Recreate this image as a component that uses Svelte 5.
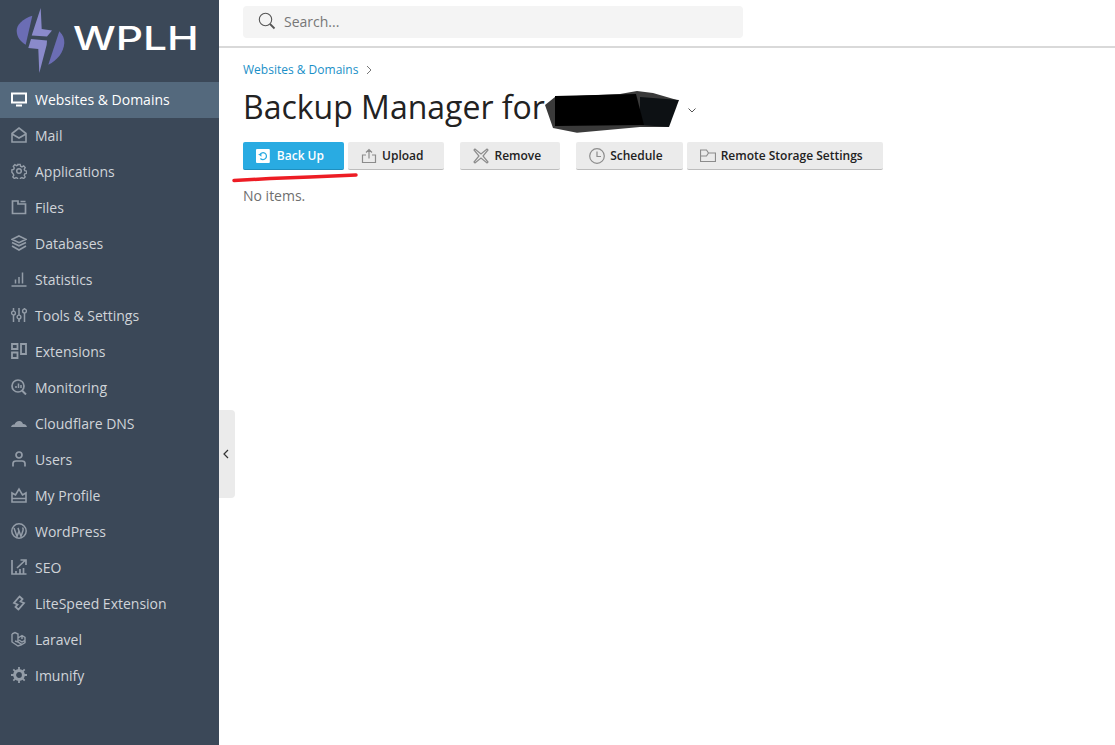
<script>
	// paths are drawn on a 16 unit box and stroked in the item colour
	const nav = [
		{ label: 'Websites & Domains', active: true, icon: '<path d="M1 2.500h14v9H1zM5 14.500h6" stroke-width="2"/>' },
		{ label: 'Mail', icon: '<path d="M1 6.500l7-5.500 7 5.500V15H1zM1 7l7 4 7-4" stroke-width="1.600"/>' },
		{ label: 'Applications', icon: '<circle cx="8" cy="8" r="2.300" stroke-width="1.500"/><path d="M6.800 1h2.400l.4 2 1.500.7 1.800-1 1.600 1.700-1 1.700.6 1.500 1.900.5v2.400l-1.900.5-.6 1.500 1 1.700-1.600 1.700-1.800-1-1.500.7-.4 1.800H6.800l-.4-1.800-1.500-.7-1.800 1-1.600-1.700 1-1.700-.6-1.500L.5 9.200V6.800l1.900-.5.6-1.500-1-1.700 1.600-1.700 1.800 1 1.500-.7z" transform="translate(.4 .4) scale(.95)" stroke-width="1.500"/>' },
		{ label: 'Files', icon: '<path d="M1.500 2h5.500v3h7.500v9.500h-13zM9.500 2.500h5" stroke-width="1.700"/>' },
		{ label: 'Databases', icon: '<path d="M8 1l7 3.300-7 3.300-7-3.300zM1 7.500l7 3.300 7-3.300M1 11l7 4 7-4" stroke-width="1.600"/>' },
		{ label: 'Statistics', icon: '<path d="M.5 15h15M4.500 12.500V8.500M8 12.500V6M11.500 12.500V1.500" stroke-width="1.500"/>' },
		{ label: 'Tools & Settings', icon: '<path d="M2.500 1v3M2.500 8v7M8 1v7M8 12v3M13.500 1v1M13.500 6v9" stroke-width="1.500"/><circle cx="2.500" cy="6" r="1.900" stroke-width="1.400"/><circle cx="8" cy="10" r="1.900" stroke-width="1.400"/><circle cx="13.500" cy="4" r="1.900" stroke-width="1.400"/>' },
		{ label: 'Extensions', icon: '<path d="M1 1h5.500v5H1zM1 9.500h5.500V15H1zM10 1h5v10h-5z" stroke-width="1.800"/>' },
		{ label: 'Monitoring', icon: '<circle cx="7" cy="7" r="6" stroke-width="1.700"/><path d="M11 11.500l4 4" stroke-width="2"/><path d="M5 9V7M7.500 9V4.500M10 9V6" stroke-width="1.500"/>' },
		{ label: 'Cloudflare DNS', icon: '<path d="M0 12c.500-2 2-2.500 3.500-2.500C4.500 7 6.500 5.500 9 6c1.500.300 2.500 1.500 3 3 1.800-.200 3.500 1 4 3z" fill="currentColor" stroke="none"/>' },
		{ label: 'Users', icon: '<circle cx="8" cy="4" r="3" stroke-width="1.700"/><path d="M2 15.500V12.500c0-2 1.500-2.500 3-2.500h6c1.500 0 3 .500 3 2.500v3" stroke-width="1.700"/>' },
		{ label: 'My Profile', icon: '<path d="M1 6l3.500 2L8 2l3.500 6L15 6v9H1zM1 11.500h14" stroke-width="1.600"/>' },
		{ label: 'WordPress', icon: '<circle cx="8" cy="8" r="7.200" stroke-width="1.500"/><path d="M3 5l3 8.500 2-5.500-1-3M7 5l3 8.500 2-6c.500-1.500 0-2.500-.5-3" stroke-width="1.500"/>' },
		{ label: 'SEO', icon: '<path d="M1 1v14h14.500M6 9l8-7.500M9.500 1H15v5M5 15v-3M9 15v-5M12.500 15V9" stroke-width="1.700"/>' },
		{ label: 'LiteSpeed Extension', icon: '<path d="M8.500 1.500L3 8l3.500 1.500L4.500 12 8 15M7.500 14.500L13 8 9.500 6.500 11.500 4 8 1" stroke-width="1.800"/>' },
		{ label: 'Laravel', icon: '<path d="M1 3l3-1.500L7 3v8l4 2.500 3-1.800V9M1 3v8l6 4 4-1.500M4 10l3 1M7 7l4-2.500 3 1.800v3L11 11 8 9M11 4.500V8" stroke-width="1.400"/>' },
		{ label: 'Imunify', icon: '<circle cx="8" cy="8" r="4.400" stroke-width="3"/><path d="M8 0v3M8 13v3M0 8h3M13 8h3M2.300 2.300l2 2M11.700 11.700l2 2M13.700 2.300l-2 2M4.300 11.700l-2 2" stroke-width="1.800"/>' }
	]
	const actions = [
		{ label: 'Upload', cls: 'upload', icon: '<path d="M5 7H1.500v7.500h13V7H11M8 10.500V1.500M5 4.500l3-3 3 3" fill="none"/>' },
		{ label: 'Remove', cls: 'remove', gap: true, icon: '<path d="M2 1L1 2l5 6-5 6 1 1 6-5 6 5 1-1-5-6 5-6-1-1-6 5z" fill="none"/>' },
		{ label: 'Schedule', cls: 'schedule', gap: true, icon: '<circle cx="8" cy="8" r="7.300" fill="none"/><path d="M8 3.500V8.500h4" fill="none"/>' },
		{ label: 'Remote Storage Settings', cls: 'remote', icon: '<path d="M.5 13.500V2h6l2 3h7v8.500zM.5 8h6l2-3" fill="none"/>' }
	]
</script>

<div class="page">
	<aside class="sidebar">
		<div class="logo">
			<svg class="mark" width="52" height="66" viewBox="15 8 52 66">
				<path d="M32.300 15.700C22 19 16.500 25 16.700 31c.2 6 3.500 10.500 9 13.700z" fill="#6b6db4"/>
				<path d="M59.300 31.300C63 35 64.500 38.500 64.300 43c-.4 9-7 17.500-16 21.700z" fill="#6b6db4"/>
				<path d="M40.700 8L41.700 29 52 30.500 47 36.500 31.700 35.500z" fill="#8a8acb"/>
				<path d="M31 39L47 40.500 46.700 44.700 39.300 73 38.300 49 28.300 48z" fill="#8a8acb"/>
			</svg>
			<span class="brand">WPLH</span>
		</div>
		<nav>
			{#each nav as item}
				<div class="nav-item" class:active={item.active}>
					<svg class="nav-icon" viewBox="0 0 16 16" width="16" height="16">{@html item.icon}</svg>
					<span>{item.label}</span>
				</div>
			{/each}
		</nav>
	</aside>

	<button class="collapse" aria-label="Collapse">
		<svg width="6" height="10" viewBox="0 0 6 10"><path d="M5 1L1 5l4 4" fill="none" stroke="#333" stroke-width="1.200"/></svg>
	</button>

	<main>
		<header class="topbar">
			<div class="search">
				<svg width="18" height="18" viewBox="0 0 18 18"><circle cx="7.500" cy="7.500" r="6.200" fill="none" stroke="#555" stroke-width="1.100"/><path d="M12 12l4.500 4.500" stroke="#555" stroke-width="1.800"/></svg>
				<span>Search...</span>
			</div>
		</header>
		<div class="content">
			<div class="crumbs">
				<span>Websites &amp; Domains</span>
				<svg width="6" height="10" viewBox="0 0 6 10"><path d="M1 1l4 4-4 4" fill="none" stroke="#777" stroke-width="1"/></svg>
			</div>
			<div class="title">
				<h1>Backup Manager for</h1>
				<svg class="caret" width="8" height="5" viewBox="0 0 8 5"><path d="M.5.500L4 4 7.500.500" fill="none" stroke="#555" stroke-width="1"/></svg>
			</div>
			<div class="toolbar">
				<button class="btn primary">
					<svg width="14" height="14" viewBox="0 0 14 14"><rect width="14" height="14" rx="1" fill="#fff"/><path d="M4 5.500A3.500 3.500 0 1 1 4.500 9.500" fill="none" stroke="#29abe2" stroke-width="1.300"/><path d="M2 5h3.500V7.800z" fill="#29abe2"/></svg>
					Back Up
				</button>
				{#each actions as a}
					<button class="btn {a.cls}" class:gap={a.gap}>
						<svg width="16" height="16" viewBox="0 0 16 16" stroke="#8c8c8c" stroke-width="1.200">{@html a.icon}</svg>
						{a.label}
					</button>
				{/each}
			</div>
			<p class="empty">No items.</p>
		</div>
	</main>

	<!-- marks drawn over the screenshot: the blacked out name and the red underline -->
	<svg class="marks" width="1115" height="745" viewBox="0 0 1115 745">
		<path d="M555 97L545 105 553 128 577 132.700 640 127 668 127 677 100 653 93 637 91 620 94z" fill="#3a3a3a"/>
		<path d="M640 97L679 100 669 127 640 125z" fill="#0d1114"/>
		<path d="M555 96L636 94 644 125 555 126z" fill="#000"/>
		<path d="M234 180.500L270 178.500 310 177 356 175" fill="none" stroke="#ed1c24" stroke-width="3.500" stroke-linecap="round"/>
	</svg>
</div>

<style>
	:global(body) {
		margin: 0;
		background: #fff;
		font-family: "Open Sans", sans-serif;
	}
	.page {
		position: relative;
		display: flex;
		width: 1115px;
		height: 745px;
		overflow: hidden;
	}
	.sidebar {
		flex: 0 0 219px;
		background: #3b4858;
	}
	.logo {
		display: flex;
		align-items: center;
		height: 82px;
		padding-left: 15px;
		box-sizing: border-box;
	}
	.mark {
		flex: none;
	}
	.brand {
		margin-left: 6px;
		margin-bottom: 5px;
		font-family: "Inter", sans-serif;
		font-weight: 500;
		font-size: 33px;
		line-height: 1;
		color: #fff;
		transform: scaleX(1.29);
		transform-origin: left center;
	}
	.nav-item {
		display: flex;
		align-items: center;
		gap: 8px;
		height: 36px;
		padding: 0 0 2px 11px;
		box-sizing: border-box;
		font-size: 14px;
		color: #d0d4d9;
	}
	.nav-item.active {
		background: #54697d;
		color: #fff;
	}
	.nav-icon {
		flex: none;
		color: #949da8;
		fill: none;
		stroke: currentColor;
	}
	.active .nav-icon {
		color: #fff;
	}
	.collapse {
		position: absolute;
		left: 219px;
		top: 410px;
		width: 16px;
		height: 88px;
		padding: 0 2px 0 0;
		border: 0;
		border-radius: 0 4px 4px 0;
		background: #ebebeb;
		display: flex;
		align-items: center;
		justify-content: center;
	}
	main {
		flex: 1;
		min-width: 0;
	}
	.topbar {
		height: 40px;
		border-bottom: 2px solid #d9d9d9;
		padding: 6px 0 0 24px;
	}
	.search {
		display: flex;
		align-items: center;
		gap: 8px;
		width: 500px;
		height: 32px;
		padding: 0 0 2px 15px;
		box-sizing: border-box;
		background: #f4f4f4;
		border-radius: 4px;
		font-size: 14px;
		color: #777;
	}
	.content {
		padding: 0 24px;
	}
	.crumbs {
		display: flex;
		align-items: center;
		gap: 8px;
		margin-top: 13px;
		height: 17px;
		font-size: 12px;
		color: #1a8fc7;
	}
	.title {
		display: flex;
		align-items: center;
		margin-top: 9px;
		height: 40px;
	}
	h1 {
		margin: 0;
		font-weight: 400;
		font-size: 32px;
		line-height: 40px;
		color: #222;
	}
	.caret {
		margin-left: 143px;
		margin-top: 6px;
	}
	.toolbar {
		display: flex;
		gap: 4px;
		margin-top: 15px;
	}
	.btn {
		display: flex;
		align-items: center;
		gap: 5px;
		height: 28px;
		padding: 0 20px 0 13px;
		border: 0;
		border-bottom: 1px solid #bdbdbd;
		border-radius: 2px;
		background: #ebebeb;
		font-family: inherit;
		font-size: 12px;
		font-weight: 600;
		color: #222;
		white-space: nowrap;
	}
	.btn.gap {
		margin-left: 12px;
	}
	.btn.upload {
		padding-right: 21px;
	}
	.btn.remove {
		padding-right: 19px;
	}
	.btn.primary {
		background: #29abe2;
		border-bottom-color: #1f8fbf;
		color: #fff;
		gap: 7px;
		width: 101px;
		box-sizing: border-box;
	}
	.empty {
		margin: 17px 0 0;
		font-size: 14px;
		line-height: 18px;
		color: #6f6f6f;
	}
	.marks {
		position: absolute;
		left: 0;
		top: 0;
		pointer-events: none;
	}
</style>
